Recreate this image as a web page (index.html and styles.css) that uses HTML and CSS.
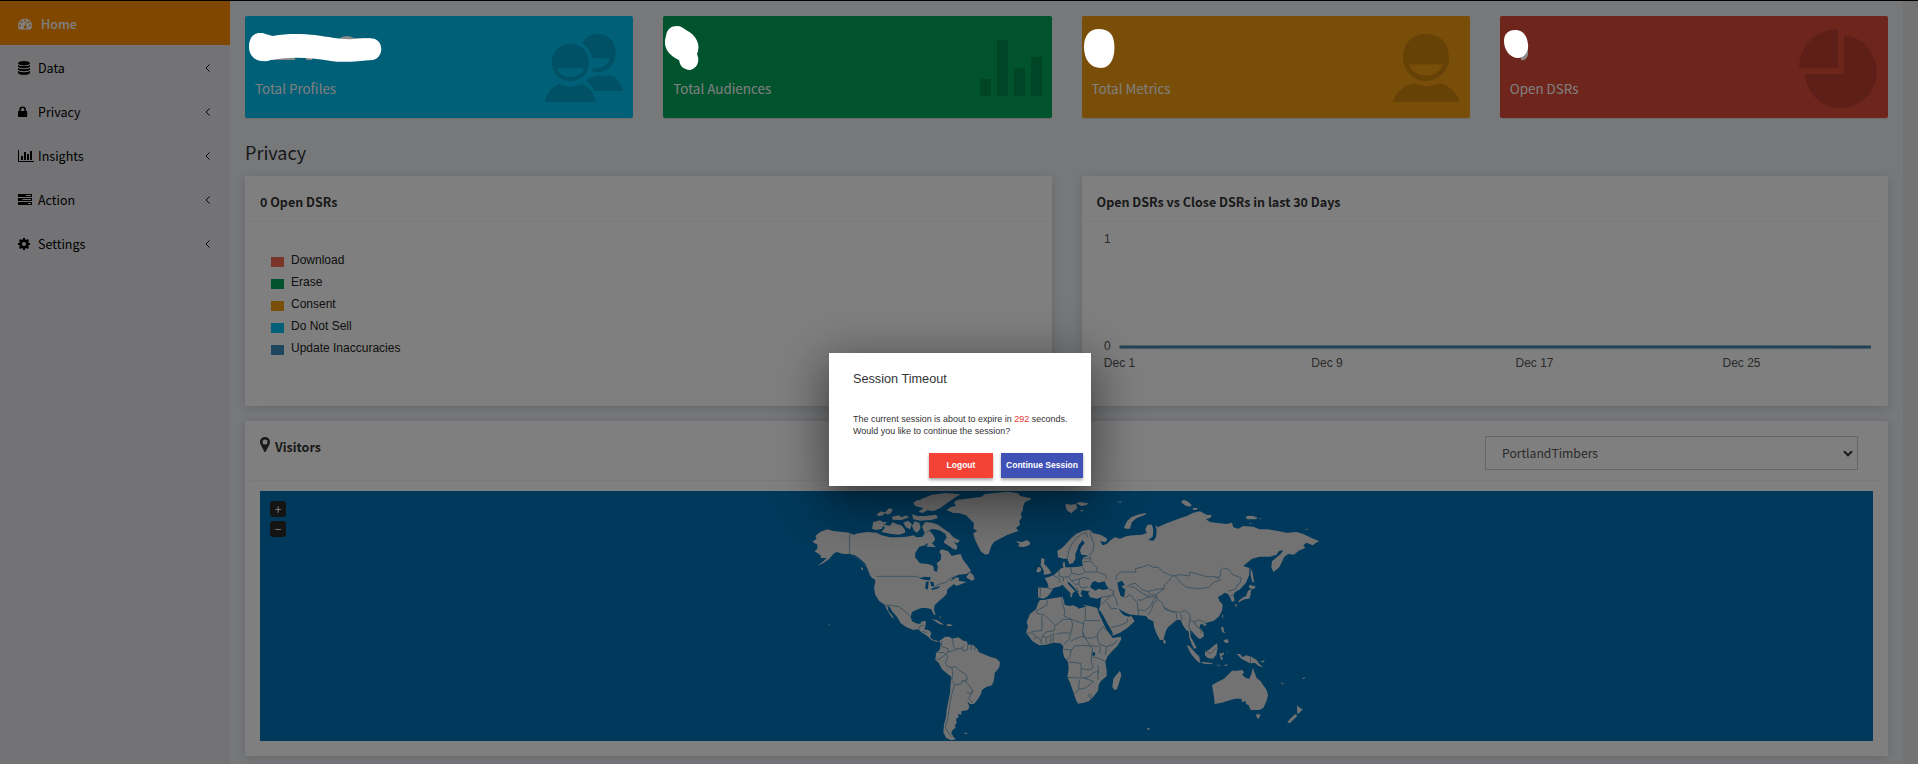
FILE: index.html
```html
<!DOCTYPE html>
<html lang="en">
<head>
<meta charset="utf-8">
<title>Dashboard</title>
<link rel="stylesheet" href="styles.css">
</head>
<body>
<div class="app">
  <aside class="sidebar">
    <a class="nav-item active"><svg class="icon" viewBox="0 0 14 14"><path fill-rule="evenodd" d="M7 1.500a7 7 0 0 0-7 7c0 1.600.4 2.700 1 3.800.2.200.3.200.5.200h11c.2 0 .4 0 .5-.2.600-1.100 1-2.200 1-3.800a7 7 0 0 0-7-7zM2 7.500a1 1 0 1 1 0 2 1 1 0 0 1 0-2zM3.500 4a1 1 0 1 1 0 2 1 1 0 0 1 0-2zM7 2.500a1 1 0 1 1 0 2 1 1 0 0 1 0-2zM10.500 4a1 1 0 1 1 0 2 1 1 0 0 1 0-2zM12 7.500a1 1 0 1 1 0 2 1 1 0 0 1 0-2zM7.900 5.300l.8.200-.8 3.200a1.500 1.500 0 1 1-.8-.2z"/></svg><span>Home</span></a>
    <a class="nav-item"><svg class="icon" viewBox="0 0 12 14"><ellipse cx="6" cy="2.200" rx="6" ry="2.200"/><path d="M0 4c2 1.600 10 1.600 12 0v1.500C11 7.800 1 7.800 0 5.500zM0 7c2 1.600 10 1.600 12 0v1.500c-1 2.300-11 2.300-12 0zM0 10c2 1.600 10 1.600 12 0v1.700c-1 3-11 3-12 0z"/></svg><span>Data</span><svg class="chev" viewBox="0 0 5 8"><path d="M4.500.5L1 4l3.500 3.500"/></svg></a>
    <a class="nav-item"><svg class="icon" viewBox="0 0 12 14"><path fill-rule="evenodd" d="M1.300 6V4.700a3.300 3.300 0 0 1 6.600 0V6h.6q.7 0 .7.700v4.600q0 .7-.7.700H.7Q0 12 0 11.300V6.700Q0 6 .7 6zM3 6h3.300V4.700a1.650 1.650 0 0 0-3.300 0z"/></svg><span>Privacy</span><svg class="chev" viewBox="0 0 5 8"><path d="M4.500.5L1 4l3.500 3.500"/></svg></a>
    <a class="nav-item"><svg class="icon wide" viewBox="0 0 16 14"><path d="M0 1h1v11h15v1H0zM3 7h2v4H3zM6 3h2v8H6zM9 5h2v6H9zM12 2h2v9h-2z"/></svg><span>Insights</span><svg class="chev" viewBox="0 0 5 8"><path d="M4.500.5L1 4l3.500 3.500"/></svg></a>
    <a class="nav-item"><svg class="icon" viewBox="0 0 14 14"><path fill-rule="evenodd" d="M0 1h14v3H0zM0 5h14v3H0zM0 9h14v3H0zM8 2h5v1H8zM4.500 6H13v1H4.500zM10 10h3v1h-3z"/></svg><span>Action</span><svg class="chev" viewBox="0 0 5 8"><path d="M4.500.5L1 4l3.500 3.500"/></svg></a>
    <a class="nav-item"><svg class="icon" viewBox="0 0 12 14"><path fill-rule="evenodd" d="M5 1h2l.3 1.600 1.100.5 1.400-1 1.300 1.300-.9 1.400.5 1.100 1.300.2v1.900l-1.400.3-.5 1.100 1 1.400-1.300 1.300-1.400-1-1.100.5L7 13H5l-.3-1.400-1.100-.5-1.400 1L.9 10.800l1-1.400-.5-1.100L0 8V6.100l1.400-.2.5-1.100L1 3.400l1.300-1.300 1.400 1 1-.5zM6 5a2 2 0 1 0 0 4 2 2 0 0 0 0-4z"/></svg><span>Settings</span><svg class="chev" viewBox="0 0 5 8"><path d="M4.500.5L1 4l3.500 3.500"/></svg></a>
  </aside>
  <main class="content">
    <section class="stats">
      <div class="stat aqua"><p>Total Profiles</p>
        <svg class="stat-icon group" viewBox="170 101 204 205" preserveAspectRatio="none"><path fill-rule="evenodd" d="M236 131c29 0 49 23 49 56s-20 56-49 56-48-23-48-56 19-56 48-56zM202 204c5 16 17 27 34 27s30-11 35-27zM170 306c3-23 15-44 38-54q28 17 57 0c21 8 35 29 38 54z"/><path fill-rule="evenodd" d="M267 129c8-17 22-28 41-28 28 0 47 24 47 57s-18 58-47 58q-8 0-15-3c1-3 2-6 2-9h10c20-2 31-14 35-30h-47c-4-20-10-35-26-45zM276 241l13-9q8 0 18-6 16 5 34-1c19 9 30 26 32 48h-74c-6-14-13-24-23-32z"/></svg></div>
      <div class="stat green"><p>Total Audiences</p>
        <svg class="stat-icon group" viewBox="0 0 78 68"><path d="M16 45h11v17H16zM33 6h11v56H33zM50 34h11v28H50zM67 23h11v39H67z"/></svg></div>
      <div class="stat yellow"><p>Total Metrics</p>
        <svg class="stat-icon" viewBox="0 0 68 68"><path fill-rule="evenodd" d="M34 0c14 0 23 9.500 23 23.500S46 47 34 47 11 37.500 11 23.500 20 0 34 0zM17 30.500c2 7 9 11 17 11s15-4 17-11zM.5 68.500C3 60 11 51.500 22 49q12 6.500 26 0c10 2.500 18 11 20 19.500z"/></svg></div>
      <div class="stat red"><p>Open DSRs</p>
        <svg class="stat-icon pie" viewBox="0 0 80 80"><path d="M40 0v39H1C1 17 18 0 40 0zM46 6c19 2 33 18 33 37 0 20-16 36-36 36S8 64 7 45h39z"/></svg></div>
    </section>
    <h2 class="section-title">Privacy</h2>
    <section class="panels">
      <div class="panel">
        <div class="panel-head"><h3>0 Open DSRs</h3></div>
        <ul class="legend">
          <li><i class="sw download"></i>Download</li>
          <li><i class="sw erase"></i>Erase</li>
          <li><i class="sw consent"></i>Consent</li>
          <li><i class="sw sell"></i>Do Not Sell</li>
          <li><i class="sw update"></i>Update Inaccuracies</li>
        </ul>
      </div>
      <div class="panel">
        <div class="panel-head"><h3>Open DSRs vs Close DSRs in last 30 Days</h3></div>
        <svg class="chart" viewBox="0 0 806 184">
          <path class="series" d="M37.500 125H789"/>
          <path class="series-light" d="M78 123.500H748M37.500 126.700H789"/>
          <text x="22" y="21">1</text><text x="22" y="128">0</text>
          <g text-anchor="middle"><text x="37.500" y="145">Dec 1</text><text x="245" y="145">Dec 9</text><text x="452.500" y="145">Dec 17</text><text x="659.500" y="145">Dec 25</text></g>
        </svg>
      </div>
    </section>
    <section class="panel visitors">
      <div class="panel-head tall">
        <h3><svg class="pin" viewBox="0 0 10 15"><path fill-rule="evenodd" d="M5 0c3 0 5 2.200 5 5 0 1.500-.5 2.300-1 3.200L5.800 14.500q-.8 1-1.600 0L1 8.200C.5 7.300 0 6.500 0 5c0-2.800 2-5 5-5zm0 2.500a2.500 2.500 0 1 0 0 5 2.500 2.500 0 0 0 0-5z"/></svg>Visitors</h3>
        <div class="select"><span>PortlandTimbers</span><svg viewBox="0 0 10 7"><path d="M1 1.300l4 4 4-4"/></svg></div>
      </div>
      <div class="map">
        <svg class="world" viewBox="0 0 1613 250">
          <g transform="translate(530 -11) scale(.33333)">
            <path class="land" d="M67 185L80 176 76 168 90 156 112 148 130 153 178 158 190 164 205 160 230 156 260 158 275 166 300 172 325 172 350 170 372 166 378 172 398 170 405 158 418 152 430 165 436 178 428 188 420 196 412 190 405 196 388 200 376 218 375 232 390 250 415 252 430 258 432 272 440 276 444 262 440 250 452 240 454 226 448 215 455 208 475 214 485 228 500 224 512 222 518 238 532 256 543 272 530 282 505 284 490 292 480 304 500 292 508 294 506 302 530 306 520 310 500 318 492 312 480 322 472 328 470 342 462 350 448 362 434 376 432 388 437 406 430 402 424 388 410 384 395 384 378 390 366 396 362 410 366 424 378 430 390 432 396 424 408 424 406 440 402 448 416 450 424 458 420 472 430 480 445 483 440 486 424 480 412 468 396 458 384 448 370 450 350 442 332 430 322 412 308 396 298 380 292 378 296 394 308 408 312 418 304 410 290 388 284 374 268 364 256 345 252 325 256 305 254 298 244 290 234 272 225 250 210 236 195 226 180 222 160 222 140 216 130 222 118 236 100 250 82 258 100 244 110 234 92 234 92 226 74 214 82 206 82 194zM528 292L540 276 550 286 554 298 545 302 538 298z"/>
            <path class="land" d="M470 90L484 80 498 78 492 68 500 60 530 56 575 50 585 42 620 38 655 35 685 40 690 48 720 54 724 58 705 66 700 78 698 92 692 102 696 112 688 122 690 134 678 144 686 152 670 158 650 166 630 176 612 186 604 198 596 222 586 224 572 214 560 190 554 176 550 160 562 152 550 146 552 130 540 118 528 106 510 100 488 98z"/>
            <path class="land" d="M678 184l18 3 14-6 10 6-2 8-18 6-16-3 6-6zM392 58l34-14 40-5 46 4-14 8-18 12-20 14-10 8-20 8-18-2-14 8-12-4 14-10-4-10 12-8-14-2zM370 68l14-9 18 3 12 12-14 10-18-4-8-4zM259 104l14-10 14 4-8 8-12 2zM284 98l14-14 10 4-4 10-10 6zM246 146l4-20 20-5 10 6 12-2-10 10-8 12-16 3zM274 156l10-12-4-10 20 3 8-10 14 6 12 3 10 12 2 10-20 6-22-2-14-3-12-2zM306 110l20-4 10 6 12-6 10 6-24 8-26-1zM340 128l14-6 12 10-6 16-12-6zM366 138l8-14 14 4 4 16-10 14-10-6zM366 102l16 6 24 0 32-4 6 10-20 6-34 2-20-4zM396 140l10-14 20 2 18 6 22 16 12 8 12 14 20 10-8 8-10-5 10 14-2 10-10-2-14-10-16-10 10-14-4-12-18-10-20-4-10 4-14 8zM416 186l12 6 10 10-14-2-14 0zM213 262l6 2 0 7-5-3zM236 280l20 14 2 5-12-5zM424 418l16 2 18 11 4 4-14-3-12-8zM468 434l12-2 9 5-16 2zM448 408l4 2 0 8zM114 432h6v2zM520 758l14 1-6 4z"/>
            <path class="land" d="M456 478L464 470 478 470 486 476 505 472 520 482 530 484 534 494 548 494 562 506 566 516 580 522 600 530 620 536 630 546 628 562 614 580 612 600 606 616 590 620 576 630 572 644 562 660 552 672 540 672 532 664 538 680 534 690 514 694 514 704 504 702 506 710 498 718 500 728 494 738 498 742 486 752 484 760 490 770 498 778 484 781 468 774 460 756 462 734 468 710 470 690 474 668 480 640 482 610 484 590 470 580 456 568 446 548 436 540 438 520 450 508 452 490 446 484z"/>
            <path class="border" d="M179 157V222L200 234 215 244 236 270M260 289H380L392 296 406 292 416 302M432 320L450 312 470 306 484 292 500 292M284 376L300 376 326 380 340 390 356 404 362 412M386 450L390 438 402 436M396 454L410 458M454 483L456 500 474 506 474 516M440 516L462 518 474 530M488 478L490 498 498 508 516 504 524 494M516 504L520 514 534 508 532 494M544 494L544 510M556 498L554 512M474 516L490 512 498 508M440 540L456 532 474 516M474 530L466 548 472 560 486 562 496 560M486 562L488 580 486 600M496 560L510 572 528 584 532 600 516 602 514 612 494 614 486 602M494 614L486 640 480 670 474 710 466 744 484 770M516 602L530 606 548 632 544 640 530 638M548 632L536 656 550 670"/>
            <path class="sea" d="M388 294L404 290 422 292 420 300 404 300zM407 306L416 304 414 328 406 326zM420 304L432 308 432 320 424 318zM422 326L438 322 450 318 446 324 428 330zM444 172L462 172 460 188 442 185z"/>
          </g>
          <g transform="translate(750 -11) scale(.33333)">
            <path class="land" d="M84 322L108 324 116 322 112 308 104 294 118 290 132 284 146 272 154 264 160 264 158 248 164 246 166 262 186 262 204 260 218 258 216 242 220 232 236 228 228 226 214 224 210 212 214 200 224 190 218 180 206 196 202 208 196 222 196 238 188 250 178 252 172 236 160 236 144 232 142 212 156 204 168 192 182 176 198 162 220 152 240 149 250 160 272 164 292 176 288 186 270 184 278 196 290 192 300 182 314 172 330 176 350 168 372 166 395 164 410 160 406 148 412 134 426 134 430 150 428 170 414 180 430 182 438 172 440 150 436 136 444 142 456 136 470 130 490 122 512 114 530 108 550 98 570 94 590 104 606 106 600 114 588 118 600 126 630 130 650 132 666 128 670 142 685 146 700 138 730 140 748 148 770 148 800 152 830 158 860 156 880 162 900 172 928 184 918 188 908 196 890 188 880 196 886 204 866 212 852 224 834 222 822 232 814 250 806 264 790 276 784 262 786 244 800 232 812 222 820 210 806 214 800 224 780 230 750 230 726 236 700 258 718 264 718 284 708 308 690 328 676 336 670 344 674 362 666 366 660 352 654 342 644 338 634 346 624 350 628 362 638 374 636 392 628 408 612 422 590 428 580 434 572 432 568 442 580 456 582 468 570 478 562 472 556 466 546 454 540 450 542 470 552 488 560 504 552 506 546 494 538 474 536 454 528 450 518 434 512 420 500 420 488 430 474 442 468 452 460 480 450 480 440 462 432 440 430 424 416 418 408 408 385 406 362 404 350 400 336 392 326 386 332 396 342 406 356 410 364 408 374 424 352 444 330 458 306 468 298 458 288 436 272 408 264 394 270 380 272 362 274 352 262 356 240 352 234 340 240 334 232 334 216 330 212 340 218 350 210 350 202 334 186 316 176 306 172 308 180 318 196 334 188 340 186 350 180 350 182 340 168 326 158 314 146 320 130 324 122 338 112 350 100 356 84 352z"/>
            <path class="land" d="M100 360L128 355 158 350 162 364 164 374 178 378 190 376 206 384 220 374 240 378 262 384 266 398 278 424 288 446 302 466 308 474 332 470 334 478 322 498 306 514 292 530 286 546 290 570 290 588 272 604 266 616 264 632 250 650 236 664 222 668 204 671 198 660 190 636 180 608 172 590 176 568 174 546 162 530 158 512 160 498 150 490 130 488 108 494 88 496 68 484 56 468 48 458 54 440 50 426 60 402 78 388 84 370 90 360zM330 572l4 14-6 20-7 22-8 2-6-10 3-24 8-10zM462 477l6 8-4 8-5-8z"/>
            <path class="land" d="M606 616L618 608 642 596 654 584 666 572 680 572 698 570 702 578 696 584 708 594 718 596 724 582 728 564 734 578 740 594 752 604 760 616 770 630 774 645 770 662 760 684 748 690 722 690 716 676 708 672 708 664 696 666 694 656 676 656 654 662 636 668 614 672 612 650zM738 702l14 2-6 12-5-2zM862 676l8 8 8 4-7 8-8 7-2-12zM856 702l6 5-12 12-10 11-8-3 8-10z"/>
            <path class="land" d="M94 234l10 3-2 14 8 8 8 10 6 10-10 4-14 1 2-8-4-10-6-10zM79 272l6-12 8 4 0 10-10 4zM18 184l18 3 14-6 10 6-2 8-18 6-16-3 6-6zM166 72l18 2 14-2 4 12-12 10-6 6-12-8-4-8zM198 70l12-4 24 4-4 5-16 3zM210 90l10 0-4 5zM318 65l18 0-4 3zM342 142l10-20 14-12 22-7 22-4-6 6-24 9-14 12-6 20-14 0zM513 66l8-7 14 6 10 10-4 5-14-3-8-6zM548 84l16 0-4 5-10 1zM706 112l8-5 16 1 14 6-8 4-24 0zM746 114l10 2-4 2zM718 128l8 2-6 2zM882 148l12-2-2 3zM722 264l6 14 4 26-3 6-4-10-3-14zM716 320l4-6 18 6-8 8-8-2zM724 328l-2 14-4 14-14 2-10 4-8 6 0-6 14-10 8-4 6-16zM676 372l4 0 0 9-4-2zM580 432l10 0-6 8zM636 408l4-6-1 14zM634 440l6 2 2 12 4 6-8-3-4-8zM640 480l14-2 2 10-10 1zM530 496l8 2 16 18 14 14 3 20-14-11-14-18zM570 545l18 2 20 3-2 3-24-2zM585 515l12-6 14-12 10-7 2 14-4 20-10 12-16-2-8-8zM628 520l10 0 4-5-1 9-7 4 6 10-7 1-3-12zM616 555l12-1 4 3zM640 556l14-3-4 5zM650 508l4 14-2-2zM680 522l10 0 8 10 10-6 16 4 16 10 8 12 12 10-14-4-12-10-8 2-10-2-10-6-10-4zM750 546l14-6-3 7zM772 542l6 4zM810 606l10 8 0-4zM876 596l10-6-4 7zM920 203l12 3zM412 744h6v5h-6z"/>
            <path class="border" d="M320 300L318 288 332 276 378 276 376 266 394 262 414 254 430 262 446 262 458 276 488 288 478 300 464 314 462 326 440 328 428 332 412 334 396 328 376 310 358 314 352 322M488 288L510 284 538 288 540 276 562 282 590 290 620 290 632 300 612 306 596 322 566 326 530 322 510 306 496 288M616 296L632 288 630 272 640 264 656 268 668 284 694 294 690 310 680 316 678 326 654 334M462 326L438 344 442 358 456 368 462 382 480 392 510 398 524 390 540 404 540 420 552 426 568 420 586 428M442 358L430 372 424 392 412 406M462 382L466 388 496 400M500 400L500 418M512 402L516 420M540 420L536 440 548 464M552 426L560 440 574 448 572 460M382 368L384 390 404 392 420 380 430 362 438 350 410 352 396 360 382 360M382 368L360 344 346 354M384 390L386 406M308 340L318 356 322 376M272 374L294 356 300 344M290 366L304 386 322 386M304 442L330 436 352 426 352 416M358 320L372 322 400 342 420 350M274 352L310 346 310 332 296 328M412 334L424 346 438 344M662 348L670 346"/>
            <path class="border" d="M172 236L176 214 184 194 196 178 212 164 228 158 234 172M240 152L244 172 252 192 248 216 236 226M220 236H240M218 246L240 244M240 228L244 246 260 262 262 276 290 286 288 296M218 260L224 276 262 276M182 262L186 280 206 284 222 280M146 268L148 288 160 292 176 290 186 280M130 286L148 296 150 308M160 292L160 304M176 290L184 302 204 298 222 292 240 298M184 302L196 314 206 312 210 296M206 312L214 324 236 320M200 322L206 336M84 324L92 326 90 350M112 324L128 328"/>
            <path class="border" d="M112 362L110 376 88 388 80 392 80 400 102 404 136 436 160 418 184 418M96 406L96 452 64 454M136 436L132 452 108 456 96 470M154 350L158 372 164 392 162 408 184 418 222 432M226 378V422H270M184 418L188 436 182 460M222 422L218 456 222 474M140 462L160 458 182 460 178 478 162 492M182 484L200 474 220 468M218 456L226 474 250 474 262 466 268 452 278 440 296 456 304 468M226 474L240 496 262 500 272 494 264 482 262 466M272 494L290 500 312 492 322 480M272 500L268 520M160 508L184 510 194 498 214 496 240 498 248 506 244 530 244 548 250 562M184 510L180 530 170 540M176 546L196 548 212 550 214 566 238 570 250 562M246 530L268 536 290 546M174 592L206 594 222 594M214 566L212 590M222 594L240 588 250 578 264 574 264 600M208 600L206 628 194 642M206 628L226 624 240 614 250 604 222 594M264 556L266 580M50 458L70 460 78 474M72 476L84 470 92 484M94 474V494M108 474V492M124 470L120 490M132 462L128 488M96 470L112 472 130 462M290 500L286 524M234 646L240 642 246 648 240 654zM721 526V552M588 515L602 521 620 503"/>
            <path class="sea" d="M240 322L246 308 254 303 266 308 284 304 288 314 296 326 280 330 266 326 256 332zM322 308L336 302 344 314 334 320 346 328 342 352 332 348 326 330zM262 388L272 394 290 426 308 458 308 468 300 462 284 438zM246 518L254 516 256 526 248 528zM204 384L214 376 224 376 226 380 206 386z"/>
          </g>
        </svg>
        <div class="zoom-controls"><button>+</button><button>−</button></div>
      </div>
    </section>
  </main>
  <div class="scroll-gutter"></div>
</div>
<div class="overlay">
  <div class="dialog">
    <h1>Session Timeout</h1>
    <p>The current session is about to expire in <em>292</em> seconds.<br>Would you like to continue the session?</p>
    <div class="actions"><button class="logout">Logout</button><button class="continue">Continue Session</button></div>
  </div>
</div>
<svg class="redactions" viewBox="0 0 1918 764">
  <path class="remnant" d="M263 58h32v2h-32zM306 57h6v3h-6zM320 37h10v4h-10zM340 38q7-4 14 0h17v2h-31zM1521 55l7-8v8q-2 6-7 5z"/>
  <path d="M249 47c0-9 4-14 11-14 5 0 7 2 13 3 15-3 31-2 42-1 15 2 27 5 38 4 9-1 17-1 20-.5 11 2 11 19 0 21.500-14 1-30 3-42 1-17-3-38-5-60-1-10 4-22-1-22-13z"/>
  <path d="M666 36c1-7 5-10 11-10 4 0 6 2 9 4 11 5 15 16 11 24 4 9-2 16-8 16-6-1-9-4-10-10-9-4-17-12-13-24z"/>
  <path d="M1084 47c0-11 5-18 15-18 9 0 14 5 15 13 2 14-3 26-13 26-11 0-17-9-17-21z"/>
  <path d="M1504 41c0-7 4-11 11-11 8 0 12 6 13 14 1 8-4 14-10 14-8 0-14-8-14-17z"/>
</svg>
</body>
</html>
```
FILE: styles.css
```css
* { box-sizing: border-box; }
body { margin: 0; height: 764px; overflow: hidden; font-family: "Noto Sans CJK SC", "Open Sans", sans-serif; font-size: 12.5px; color: #333; }
h1, h2, h3, p, ul { margin: 0; padding: 0; }
.app { display: flex; height: 764px; border-top: 1px solid #000; background: #ecf0f5; }
.sidebar { width: 230px; flex: none; background: #e6e7eb; }
.nav-item { display: flex; align-items: center; height: 44px; padding: 1px 20px 0 18px; color: #000; }
.nav-item span { flex: 1; }
.icon { width: 14px; height: 14px; margin-right: 6px; fill: currentColor; flex: none; }
.icon[viewBox="0 0 12 14"] { width: 12px; margin-right: 8px; }
.icon.wide { width: 16px; margin-right: 4px; }
.nav-item.active { background: #ff8f00; color: #fff; font-weight: 500; }
.nav-item.active .icon { margin-right: 9px; }
.chev { width: 5px; height: 8px; fill: none; stroke: #000; stroke-width: 1; }
.content { flex: 1; min-width: 0; padding: 15px 15px 0; }
.stats { display: grid; grid-template-columns: repeat(4, 1fr); gap: 30px; }
.stat { display: flex; justify-content: space-between; height: 102px; padding: 18px 10px 0; border-radius: 2px; color: #fff; font-size: 13.400px; box-shadow: 0 1px 1px rgba(0,0,0,.1); }
.stat p { padding-top: 44px; line-height: 20px; }
.stat-icon { width: 68px; height: 68px; fill: rgba(0,0,0,.15); }
.stat-icon.group { width: 78px; }
.stat-icon.pie { width: 80px; height: 80px; margin-top: -5px; }
.aqua { background: #00c0ef; }
.green { background: #00a65a; }
.yellow { background: #f39c12; }
.red { background: #dd4b39; }
.section-title { margin: 20px 0 10px; height: 28px; font-size: 18px; line-height: 28px; font-weight: 400; }
.panels { display: grid; grid-template-columns: repeat(2, minmax(0, 1fr)); gap: 30px; }
.panel { height: 230px; background: #fff; box-shadow: 0 2px 10px rgba(0,0,0,.14); padding: 0 4px; }
.panel-head { display: flex; height: 46px; padding: 0 11px; border-bottom: 1px solid #f4f4f4; align-items: center; }
.panel-head h3 { font-size: 12.500px; font-weight: 700; padding-top: 5px; }
.legend { list-style: none; padding: 27px 0 0 22px; font: 12px/22px "Liberation Sans", Arial, sans-serif; color: #222; }
.legend li { display: flex; align-items: center; height: 22px; }
.sw { width: 13px; height: 10px; margin: 3px 7px 0 0; }
.download { background: #f56954; }
.erase { background: #00a65a; }
.consent { background: #f39c12; }
.sell { background: #00c0ef; }
.update { background: #3c8dbc; }
.chart { display: block; width: 806px; height: 184px; margin-left: -4px; font: 12px "Liberation Sans", Arial, sans-serif; fill: #555; }
.series { stroke: #4682a5; stroke-width: 3; }
.series-light { stroke: #8fc0dc; stroke-width: 1; }
.visitors { height: 335px; margin-top: 15px; }
.panel-head.tall { height: 60px; align-items: flex-start; padding-top: 15px; justify-content: space-between; }
.panel-head.tall h3 { display: flex; align-items: flex-start; gap: 5px; padding: 1px 0 0; line-height: 20px; }
.pin { width: 10px; height: 15px; fill: #333; }
.select { width: 373px; height: 34px; margin-right: 15px; border: 1px solid #ccc; padding: 0 4px 0 16px; display: flex; align-items: center; justify-content: space-between; font-size: 12.200px; color: #555; }
.select svg { width: 10px; height: 7px; fill: none; stroke: #333; stroke-width: 2; }
.map { position: relative; height: 250px; margin: 10px 11px 0; background: #0073b7; overflow: hidden; }
.world { display: block; width: 1613px; height: 250px; }
.land { fill: #e4e4e4; }
.border { fill: none; stroke: #5a94b8; stroke-width: 2.200; stroke-linejoin: round; }
.sea { fill: #0073b7; }
.zoom-controls { position: absolute; left: 10px; top: 10px; display: grid; gap: 4px; }
.zoom-controls button { width: 16px; height: 16px; padding: 0; border: 0; border-radius: 3px; background: #292929; color: #fff; font: 12px/16px "Noto Sans CJK SC", sans-serif; }
.scroll-gutter { width: 15px; flex: none; background: #e6e6e9; }
.overlay { position: absolute; inset: 0; background: rgba(0,0,0,.5); padding: 353px 0 0 829px; }
.dialog { width: 262px; height: 133px; padding: 16px 8px 0 24px; background: #fff; font-family: "Liberation Sans", Arial, sans-serif; color: #333; box-shadow: 0 11px 15px -7px rgba(0,0,0,.2), 0 24px 38px 3px rgba(0,0,0,.14), 0 9px 46px 8px rgba(0,0,0,.3); }
.dialog h1 { font-size: 12.700px; line-height: 20px; font-weight: 400; }
.dialog p { margin-top: 24px; font-size: 8.960px; line-height: 12px; white-space: nowrap; }
.dialog em { font-style: normal; color: #e53935; }
.actions { display: flex; justify-content: flex-end; gap: 8px; margin-top: 16px; }
.actions button { height: 25px; padding: 0; border: 0; color: #fff; font: bold 8.500px/25px "Liberation Sans", Arial, sans-serif; box-shadow: 0 2px 3px rgba(0,0,0,.35); white-space: nowrap; }
.logout { width: 64px; background: #f44336; }
.continue { width: 82px; background: #3f51b5; }
.redactions { position: absolute; inset: 0; width: 1918px; height: 764px; fill: #fff; pointer-events: none; }
.remnant { fill: #898989; }
```
